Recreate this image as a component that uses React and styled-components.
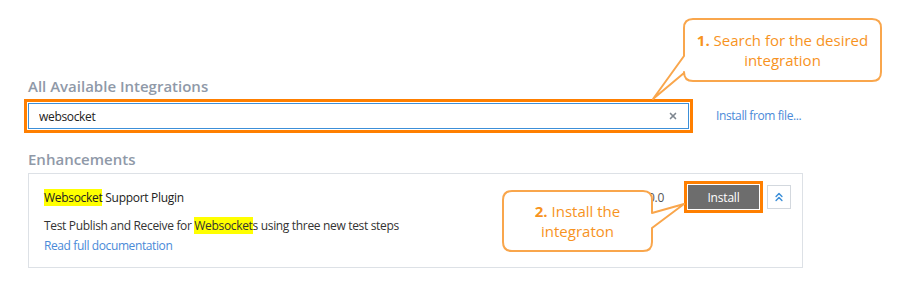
import React from "react";
import styled, { createGlobalStyle } from "styled-components";
import { X, ChevronsUp } from "lucide-react";

const GlobalStyle = createGlobalStyle`
  html, body {
    margin: 0;
    padding: 0;
    background: #fff;
  }
  body {
    font-family: "Open Sans", "Noto Sans", sans-serif;
    color: #333;
  }
`;

const Page = styled.div`
  position: relative;
  width: 905px;
  height: 290px;
  box-sizing: border-box;
  padding: 76px 0 0 28px;
  overflow: hidden;
`;

const SectionTitle = styled.h2`
  margin: 0;
  font-size: 15px;
  line-height: 20px;
  font-weight: 600;
  color: #8f99a8;
`;

const SearchRow = styled.div`
  display: flex;
  align-items: center;
  margin-top: 7px;
`;

const SearchField = styled.div`
  display: flex;
  align-items: center;
  width: 661px;
  height: 26px;
  box-sizing: border-box;
  border: 1px solid #3c8fd8;
  padding: 0 10px;
  outline: ${({ $marked }) => ($marked ? "3px solid #ff7f00" : "none")};
  outline-offset: 1px;
`;

const SearchInput = styled.input`
  flex: 1;
  border: none;
  outline: none;
  padding: 0;
  font-family: inherit;
  font-size: 12px;
  letter-spacing: -0.33px;
  color: #222;
  background: transparent;
`;

const Clear = styled.span`
  display: flex;
  color: #7f8790;
`;

const Link = styled.a`
  font-size: 12px;
  line-height: 20px;
  letter-spacing: -0.4px;
  color: #4a8ad8;
  text-decoration: none;
  margin-left: ${({ $gap }) => $gap || 0}px;
`;

const SubTitle = styled(SectionTitle)`
  margin-top: 20px;
`;

const Card = styled.div`
  display: flex;
  justify-content: space-between;
  align-items: flex-start;
  width: 775px;
  box-sizing: border-box;
  margin-top: 4px;
  padding: 12px 11px 11px 15px;
  border: 1px solid #dde1e6;
`;

const CardBody = styled.div`
  display: flex;
  flex-direction: column;
`;

const CardTitle = styled.div`
  font-size: 12px;
  line-height: 24px;
  letter-spacing: -0.3px;
  color: #222;
`;

const Description = styled.div`
  margin-top: 6px;
  font-size: 12px;
  line-height: 20px;
  letter-spacing: -0.33px;
  color: #333;
`;

const Mark = styled.span`
  background: #ffff00;
`;

const CardActions = styled.div`
  display: flex;
  align-items: center;
  gap: 8px;
  margin-top: -1px;
`;

const Version = styled.span`
  font-size: 12px;
  letter-spacing: -0.3px;
  color: #555;
  margin-right: 16px;
`;

const InstallButton = styled.button`
  width: 71px;
  height: 24px;
  border: none;
  background: #6d6d6d;
  color: #fff;
  font-family: inherit;
  font-size: 12px;
  letter-spacing: -0.2px;
  padding: 0;
  outline: ${({ $marked }) => ($marked ? "3px solid #ff7f00" : "none")};
  outline-offset: 1px;
`;

const CollapseButton = styled.button`
  display: flex;
  align-items: center;
  justify-content: center;
  width: 24px;
  height: 24px;
  padding: 0;
  border: 1px solid #d3d8de;
  background: #fff;
  color: #3c8fd8;
`;

const CalloutBox = styled.div`
  position: absolute;
  left: ${({ $x }) => $x}px;
  top: ${({ $y }) => $y}px;
  width: ${({ $w }) => $w}px;
  height: ${({ $h }) => $h}px;
  display: flex;
  align-items: center;
  justify-content: center;
  text-align: center;
  font-size: 15px;
  line-height: 20px;
  color: #f7931e;
  svg {
    position: absolute;
    left: 0;
    top: 0;
    overflow: visible;
  }
  p {
    position: relative;
    margin: 0;
  }
  b {
    font-weight: 700;
  }
`;

function calloutPath(w, h, r, side, y1, y2, tx, ty) {
  if (side === "left") {
    return `M${r},0 H${w - r} Q${w},0 ${w},${r} V${h - r} Q${w},${h} ${w - r},${h} H${r} Q0,${h} 0,${h - r} V${y2} L${tx},${ty} L0,${y1} V${r} Q0,0 ${r},0 Z`;
  }
  return `M${r},0 H${w - r} Q${w},0 ${w},${r} V${y1} L${tx},${ty} L${w},${y2} V${h - r} Q${w},${h} ${w - r},${h} H${r} Q0,${h} 0,${h - r} V${r} Q0,0 ${r},0 Z`;
}

function Callout({ x, y, w, h, side, y1, y2, tx, ty, num, children }) {
  return (
    <CalloutBox $x={x} $y={y} $w={w} $h={h}>
      <svg width={w} height={h}>
        <path
          d={calloutPath(w - 2, h - 2, 9, side, y1, y2, tx, ty)}
          transform="translate(1 1)"
          fill="#fff"
          stroke="#f9a64c"
          strokeWidth="2"
          strokeLinejoin="round"
        />
      </svg>
      <p>
        <b>{num}.</b> {children}
      </p>
    </CalloutBox>
  );
}

export default function App() {
  return (
    <>
      <GlobalStyle />
      <Page>
        <SectionTitle>All Available Integrations</SectionTitle>
        <SearchRow>
          <SearchField $marked>
            <SearchInput value="websocket" readOnly />
            <Clear>
              <X size={10} strokeWidth={4} />
            </Clear>
          </SearchField>
          <Link href="#" $gap={27}>Install from file...</Link>
        </SearchRow>

        <SubTitle>Enhancements</SubTitle>
        <Card>
          <CardBody>
            <CardTitle>
              <Mark>Websocket</Mark> Support Plugin
            </CardTitle>
            <Description>
              Test Publish and Receive for <Mark>Websocket</Mark>s using three new test steps
            </Description>
            <Link href="#">Read full documentation</Link>
          </CardBody>
          <CardActions>
            <Version>1.0.0</Version>
            <InstallButton $marked>Install</InstallButton>
            <CollapseButton>
              <ChevronsUp size={14} strokeWidth={2.5} />
            </CollapseButton>
          </CardActions>
        </Card>

        <Callout x={683} y={18} w={199} h={64} side="left" y1={37} y2={54} tx={-31} ty={80} num={1}>
          Search for the desired
          <br />
          integration
        </Callout>
        <Callout x={502} y={190} w={151} h={62} side="right" y1={22} y2={37} tx={181} ty={13} num={2}>
          Install the
          <br />
          integraton
        </Callout>
      </Page>
    </>
  );
}
